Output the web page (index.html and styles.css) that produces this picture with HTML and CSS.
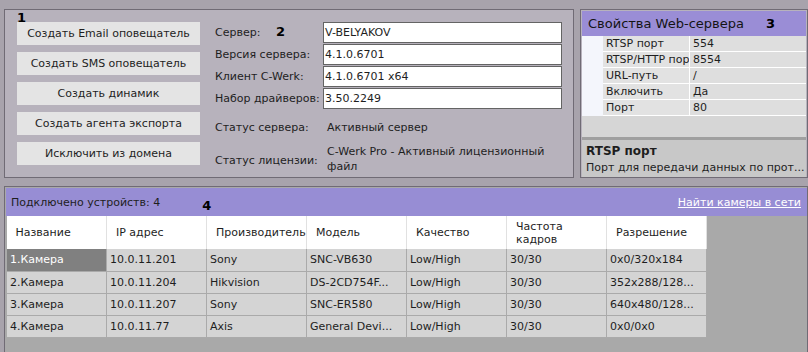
FILE: index.html
```html
<!DOCTYPE html>
<html>
  <head>
    <title>Сервер</title>
    <link rel="stylesheet" href="styles.css">
  </head>
  <body>
    <div class="top-row">
      <div class="panel server-panel">
        <span class="marker marker-1">1</span>
        <div class="button-column">
          <button class="action-button">Создать Email оповещатель</button>
          <button class="action-button">Создать SMS оповещатель</button>
          <button class="action-button">Создать динамик</button>
          <button class="action-button">Создать агента экспорта</button>
          <button class="action-button">Исключить из домена</button>
        </div>

        <div class="info-grid">
          <span class="marker marker-2">2</span>
          <div class="info-label">Сервер:</div>
          <div class="info-input">V-BELYAKOV</div>
          <div class="info-label">Версия сервера:</div>
          <div class="info-input">4.1.0.6701</div>
          <div class="info-label">Клиент C-Werk:</div>
          <div class="info-input">4.1.0.6701 x64</div>
          <div class="info-label">Набор драйверов:</div>
          <div class="info-input">3.50.2249</div>
          <div class="info-label status-row">Статус сервера:</div>
          <div class="info-value status-row">Активный сервер</div>
          <div class="info-label license-row">Статус лицензии:</div>
          <div class="info-value license-row">C-Werk Pro - Активный лицензионный файл</div>
        </div>
      </div>

      <div class="panel web-panel">
        <div class="panel-header">Свойства Web-сервера <span class="marker-inline">3</span></div>
        <div class="prop-grid">
          <div class="prop-row"><div class="prop-name">RTSP порт</div><div class="prop-value">554</div></div>
          <div class="prop-row"><div class="prop-name">RTSP/HTTP порт</div><div class="prop-value">8554</div></div>
          <div class="prop-row"><div class="prop-name">URL-путь</div><div class="prop-value">/</div></div>
          <div class="prop-row"><div class="prop-name">Включить</div><div class="prop-value">Да</div></div>
          <div class="prop-row"><div class="prop-name">Порт</div><div class="prop-value">80</div></div>
        </div>
        <div class="prop-empty"></div>
        <div class="prop-help">
          <div class="help-title">RTSP порт</div>
          <div class="help-text">Порт для передачи данных по прот...</div>
        </div>
      </div>
    </div>

    <div class="panel devices-panel">
      <div class="devices-header">
        <span class="devices-count">Подключено устройств: 4</span>
        <span class="marker-inline marker-4">4</span>
        <a class="find-link" href="#">Найти камеры в сети</a>
      </div>
      <div class="devices-body">
        <table class="devices-table">
          <tr class="head-row">
            <th>Название</th>
            <th>IP адрес</th>
            <th>Производитель</th>
            <th>Модель</th>
            <th>Качество</th>
            <th>Частота<br>кадров</th>
            <th>Разрешение</th>
          </tr>
          <tr>
            <td class="selected-cell">1.Камера</td>
            <td>10.0.11.201</td>
            <td>Sony</td>
            <td>SNC-VB630</td>
            <td>Low/High</td>
            <td>30/30</td>
            <td>0x0/320x184</td>
          </tr>
          <tr>
            <td>2.Камера</td>
            <td>10.0.11.204</td>
            <td>Hikvision</td>
            <td>DS-2CD754F...</td>
            <td>Low/High</td>
            <td>30/30</td>
            <td>352x288/128...</td>
          </tr>
          <tr>
            <td>3.Камера</td>
            <td>10.0.11.207</td>
            <td>Sony</td>
            <td>SNC-ER580</td>
            <td>Low/High</td>
            <td>30/30</td>
            <td>640x480/128...</td>
          </tr>
          <tr>
            <td>4.Камера</td>
            <td>10.0.11.77</td>
            <td>Axis</td>
            <td>General Devi...</td>
            <td>Low/High</td>
            <td>30/30</td>
            <td>0x0/0x0</td>
          </tr>
        </table>
      </div>
    </div>
  </body>
</html>
```

FILE: styles.css
```css
body {
  margin: 0;
  background-color: rgb(168, 163, 172);
  font-family: "DejaVu Sans", Verdana, sans-serif;
  font-size: 11px;
  color: rgb(30, 30, 30);
  width: 808px;
  height: 352px;
  overflow: hidden;
}

.top-row {
  display: flex;
  gap: 6px;
  padding: 9px 0 0 4px;
}

.panel {
  position: relative;
  border: solid 1px rgb(112, 107, 117);
  box-sizing: border-box;
}

.server-panel {
  display: flex;
  width: 570px;
  height: 169px;
  padding: 12px 0 0 12px;
  background-color: rgb(183, 178, 188);
}

.marker {
  position: absolute;
  font-weight: bold;
  font-size: 13px;
  color: black;
}

.marker-1 {
  left: 12px;
  top: 0px;
}

.marker-2 {
  left: 61px;
  top: 3px;
}

.marker-inline {
  font-weight: bold;
  font-size: 13px;
  color: black;
  margin-left: 20px;
}

.button-column {
  display: flex;
  flex-direction: column;
  gap: 7px;
  width: 183px;
}

.action-button {
  height: 23px;
  border: none;
  background-color: rgb(228, 228, 228);
  font-family: "DejaVu Sans", Verdana, sans-serif;
  font-size: 11px;
  color: rgb(30, 30, 30);
  padding: 0;
}

.info-grid {
  position: relative;
  display: grid;
  grid-template-columns: 108px 239px;
  grid-auto-rows: 22px;
  margin-left: 15px;
  margin-top: -1px;
  align-items: center;
}

.info-label {
  white-space: nowrap;
}

.info-input {
  height: 21px;
  box-sizing: border-box;
  border: solid 1px rgb(100, 100, 100);
  background-color: white;
  padding: 2px 1px;
  line-height: 15px;
}

.status-row {
  margin-top: 15px;
}

.info-value.status-row {
  padding-left: 4px;
}

.info-value.license-row {
  padding-left: 4px;
  line-height: 15px;
  margin-top: 34px;
}

.info-label.license-row {
  margin-top: 37px;
}

.web-panel {
  display: flex;
  flex-direction: column;
  width: 228px;
  height: 169px;
  background-color: rgb(183, 178, 188);
  padding: 1px 1px 0 1px;
}

.panel-header {
  height: 25px;
  background-color: rgb(154, 141, 214);
  font-size: 13px;
  color: rgb(20, 20, 20);
  padding: 5px 0 0 6px;
  box-sizing: border-box;
  white-space: nowrap;
}

.panel-header .marker-inline {
  margin-left: 18px;
}

.prop-grid {
  background-color: rgb(244, 246, 252);
  padding-left: 21px;
}

.prop-row {
  display: flex;
  height: 16px;
  line-height: 16px;
}

.prop-name {
  width: 87px;
  padding-left: 3px;
  box-sizing: border-box;
  white-space: nowrap;
  overflow: hidden;
  background-color: rgb(226, 226, 226);
  border-right: solid 1px white;
  border-bottom: solid 1px white;
  font-size: 11px;
}

.prop-value {
  flex: 1;
  padding-left: 3px;
  background-color: rgb(222, 222, 222);
  border-bottom: solid 1px white;
}

.prop-empty {
  height: 21px;
  background-color: rgb(214, 214, 214);
  border-bottom: solid 3px rgb(160, 160, 160);
}

.prop-help {
  flex: 1;
  background-color: rgb(200, 200, 200);
  padding: 4px 4px 0 4px;
  white-space: nowrap;
}

.help-title {
  font-weight: bold;
  font-size: 12px;
  margin-bottom: 3px;
}

.devices-panel {
  margin: 8px 0 0 4px;
  width: 804px;
  height: 170px;
  background-color: rgb(169, 169, 169);
  padding: 1px 0 0 1px;
}

.devices-header {
  display: flex;
  align-items: center;
  height: 28px;
  background-color: rgb(151, 141, 212);
  padding: 0 6px 0 5px;
}

.devices-header .marker-4 {
  margin-left: 42px;
  margin-top: 6px;
}

.find-link {
  margin-left: auto;
  color: white;
  font-size: 11px;
}

.devices-table {
  border-collapse: collapse;
  table-layout: fixed;
  width: 700px;
}

.devices-table th {
  width: 100px;
  height: 33px;
  background-color: white;
  font-weight: normal;
  text-align: left;
  padding: 0 0 0 9px;
  line-height: 13px;
  border-right: solid 1px rgb(225, 225, 225);
  box-sizing: border-box;
  white-space: nowrap;
}

.devices-table td {
  height: 22px;
  background-color: rgb(212, 212, 212);
  padding: 0 0 0 3px;
  border: solid 1px rgb(170, 170, 170);
  border-top: none;
  box-sizing: border-box;
  white-space: nowrap;
}

.devices-table td.selected-cell {
  background-color: rgb(128, 128, 128);
  color: white;
}
```
